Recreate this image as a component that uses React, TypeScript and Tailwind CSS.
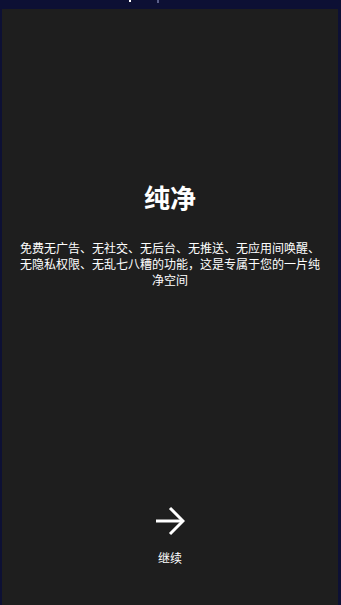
export default function App() {
  return (
    <div className="relative flex h-[605px] w-[341px] flex-col bg-[#0d1034] pl-[2px] pr-[3px] pt-[9px] font-['Noto_Sans_CJK_SC',sans-serif]">
      <span className="absolute left-[129px] top-0 h-[2px] w-[2px] bg-white" />
      <span className="absolute left-[157px] top-0 h-[3px] w-[2px] bg-[#5a5f88]" />
      <div className="flex flex-1 flex-col items-center bg-[#1e1e1e] px-[18px]">
        <h1 className="mt-[170px] text-[26px] font-bold leading-[36px] text-white">纯净</h1>
        <p className="mt-[25px] text-center text-[12px] leading-[16px] text-white">
          免费无广告、无社交、无后台、无推送、无应用间唤醒、无隐私权限、无乱七八糟的功能，这是专属于您的一片纯净空间
        </p>
        <button className="mt-[218px] flex flex-col items-center text-white">
          <svg viewBox="0 0 30 30" className="h-[30px] w-[30px]" fill="none" stroke="currentColor" strokeWidth={3}>
            <path d="M1 15H28" />
            <path d="M15 2L28 15L15 28" />
          </svg>
          <span className="mt-[14px] text-[12px] leading-[16px]">继续</span>
        </button>
      </div>
    </div>
  );
}
